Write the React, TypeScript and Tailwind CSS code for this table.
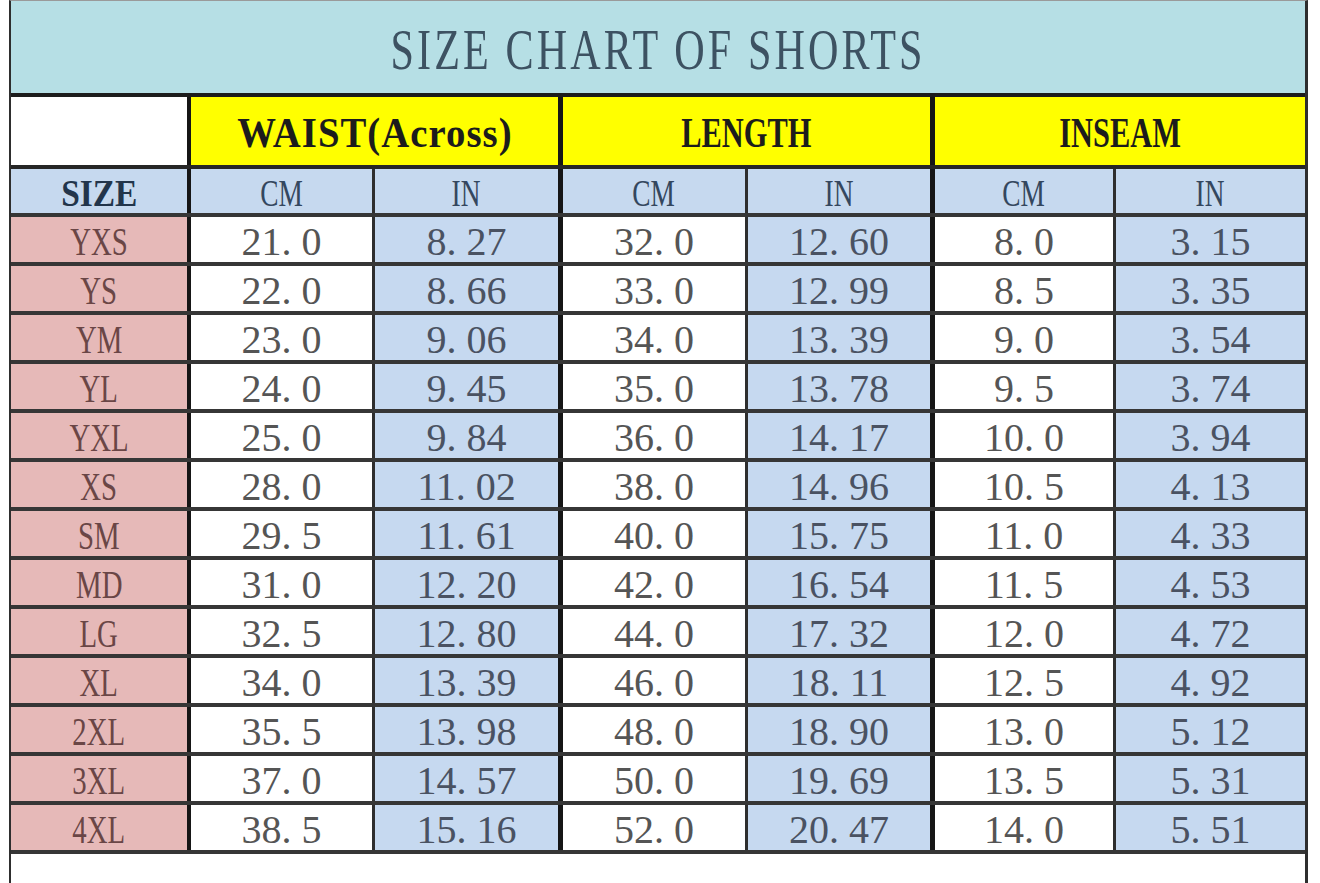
import React from 'react';

// widths include each cell's left border
const cols = [
	'w-[176px]',
	'w-[185px] border-l-4 border-[#161616]',
	'w-[186px] border-l-[3px] border-[#2e2e2e]',
	'w-[187px] border-l-[5px] border-[#161616]',
	'w-[185px] border-l-[3px] border-[#2e2e2e]',
	'w-[183px] border-l-[5px] border-[#161616]',
	'w-[192px] border-l-[3px] border-[#2e2e2e]',
];

const rows = [
	['YXS', '21.0', '8.27', '32.0', '12.60', '8.0', '3.15'],
	['YS', '22.0', '8.66', '33.0', '12.99', '8.5', '3.35'],
	['YM', '23.0', '9.06', '34.0', '13.39', '9.0', '3.54'],
	['YL', '24.0', '9.45', '35.0', '13.78', '9.5', '3.74'],
	['YXL', '25.0', '9.84', '36.0', '14.17', '10.0', '3.94'],
	['XS', '28.0', '11.02', '38.0', '14.96', '10.5', '4.13'],
	['SM', '29.5', '11.61', '40.0', '15.75', '11.0', '4.33'],
	['MD', '31.0', '12.20', '42.0', '16.54', '11.5', '4.53'],
	['LG', '32.5', '12.80', '44.0', '17.32', '12.0', '4.72'],
	['XL', '34.0', '13.39', '46.0', '18.11', '12.5', '4.92'],
	['2XL', '35.5', '13.98', '48.0', '18.90', '13.0', '5.12'],
	['3XL', '37.0', '14.57', '50.0', '19.69', '13.5', '5.31'],
	['4XL', '38.5', '15.16', '52.0', '20.47', '14.0', '5.51'],
];

function Num({ value }: { value: string }) {
	const [a, b] = value.split('.');
	return (
		<span className="inline-block translate-y-[2px]">
			{a}
			<span className="mr-[10px]">.</span>
			{b}
		</span>
	);
}

function HeaderGroup({
	label,
	cls,
	textCls,
}: {
	label: string;
	cls: string;
	textCls: string;
}) {
	return (
		<div
			className={`${cls} flex items-center justify-center bg-[#ffff00] text-[38px] font-bold text-[#1c1c1c]`}
		>
			<span className={`inline-block translate-y-[2px] scale-y-[1.1] ${textCls}`}>
				{label}
			</span>
		</div>
	);
}

export default function App() {
	return (
		<div
			className="h-[883px] w-[1320px] overflow-hidden bg-white pl-[9px]"
			style={{ fontFamily: '"Liberation Serif", "Times New Roman", serif' }}
		>
			<div className="h-full w-[1299px] border-t border-r-[3px] border-l-2 border-t-[#9a9a9a] border-r-[#2e2e2e] border-l-[#2e2e2e]">
				{/* title */}
				<div className="flex h-[92px] items-center justify-center bg-[#b6dfe5] text-[54px] text-[#3d5262]">
					<span className="inline-block translate-y-[3px] scale-x-[0.78] scale-y-[1.05] tracking-[4px]">
						SIZE CHART OF SHORTS
					</span>
				</div>

				{/* group headers */}
				<div className="flex h-[72px] border-t-4 border-[#1c1c1c]">
					<div className={`${cols[0]} bg-white`} />
					<HeaderGroup
						label="WAIST(Across)"
						cls="w-[371px] border-l-4 border-[#161616]"
						textCls="scale-x-[1.02] tracking-[1px]"
					/>
					<HeaderGroup
						label="LENGTH"
						cls="w-[372px] border-l-[5px] border-[#161616]"
						textCls="scale-x-[0.8]"
					/>
					<HeaderGroup
						label="INSEAM"
						cls="w-[375px] border-l-[5px] border-[#161616]"
						textCls="scale-x-[0.8]"
					/>
				</div>

				{/* unit row */}
				<div className="flex h-[48px] border-t-4 border-[#262626] bg-[#c6d9ef] text-[38px] text-[#34475e]">
					<div className={`${cols[0]} flex items-center justify-center font-bold text-[#22354b]`}>
						<span className="inline-block translate-y-[2px] scale-x-[0.88]">SIZE</span>
					</div>
					{['CM', 'IN', 'CM', 'IN', 'CM', 'IN'].map((u, i) => (
						<div key={i} className={`${cols[i + 1]} flex items-center justify-center`}>
							<span className="inline-block translate-y-[2px] scale-x-[0.72]">{u}</span>
						</div>
					))}
				</div>

				{/* data */}
				{rows.map((r) => (
					<div
						key={r[0]}
						className="flex h-[49px] border-t-4 border-[#363636] text-[40px] leading-none"
					>
						<div
							className={`${cols[0]} flex items-center justify-center bg-[#e6b9b8] text-[#6a4646]`}
						>
							<span className="inline-block translate-y-[2px] scale-x-[0.72]">{r[0]}</span>
						</div>
						{r.slice(1).map((v, i) => (
							<div
								key={i}
								className={`${cols[i + 1]} flex items-center justify-center ${
									i % 2 === 0 ? 'bg-white text-[#555555]' : 'bg-[#c6d9f0] text-[#4a5262]'
								}`}
							>
								<Num value={v} />
							</div>
						))}
					</div>
				))}
				<div className="border-t-4 border-[#363636]" />
			</div>
		</div>
	);
}
